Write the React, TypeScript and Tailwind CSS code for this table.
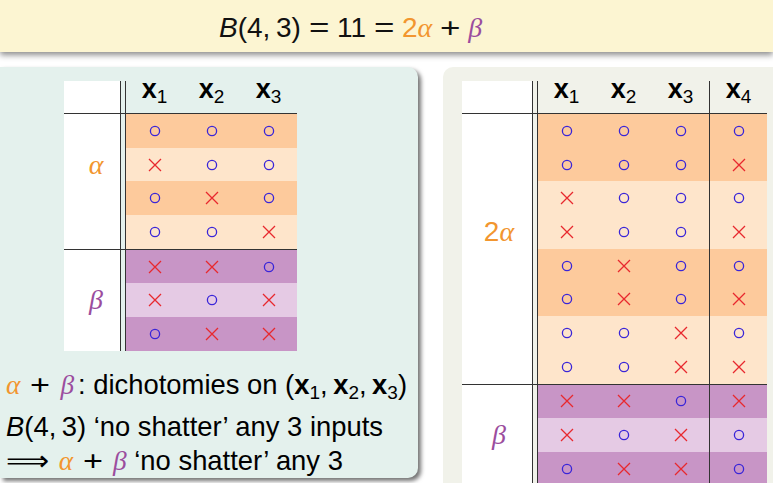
import React from "react";

type Mark = "o" | "x";

const O = () => (
  <svg width="12" height="12" viewBox="0 0 12 12">
    <circle cx="6" cy="6" r="4.6" fill="none" stroke="#3a25d8" strokeWidth="1.3" />
  </svg>
);

const X = () => (
  <svg width="14" height="14" viewBox="0 0 14 14">
    <path d="M1 1 L13 13 M13 1 L1 13" stroke="#e8282e" strokeWidth="1.3" fill="none" />
  </svg>
);

const Alpha = ({ className = "" }: { className?: string }) => (
  <span className={"italic text-[#f2962f] " + className} style={{ fontFamily: '"Liberation Serif", serif' }}>
    α
  </span>
);

const Beta = ({ className = "" }: { className?: string }) => (
  <span className={"italic text-[#9b4d9e] " + className} style={{ fontFamily: '"Liberation Serif", serif' }}>
    β
  </span>
);

const Op = ({ c, w }: { c: string; w: string }) => (
  <span className={"inline-block text-center " + w}>
    <span className="inline-block scale-x-125">{c}</span>
  </span>
);

const XLabel = ({ n }: { n: number }) => (
  <span className="font-bold text-[27px] leading-none text-black">
    x<span className="font-normal text-[19px] align-[-5px]">{n}</span>
  </span>
);

const rowBg = (kind: "ad" | "al" | "bd" | "bl") =>
  kind === "ad"
    ? "bg-[#fdca9c]"
    : kind === "al"
    ? "bg-[#fee5cb]"
    : kind === "bd"
    ? "bg-[#c895c6]"
    : "bg-[#e5cae4]";

type Row = { marks: Mark[]; bg: "ad" | "al" | "bd" | "bl" };

const DataRow = ({ row, sepIndex }: { row: Row; sepIndex?: number }) => (
  <div className={"flex h-[33.7px] " + rowBg(row.bg)}>
    {row.marks.map((m, i) => (
      <div
        key={i}
        className={
          "flex items-center justify-center " +
          (sepIndex !== undefined && i === sepIndex ? "w-[58px] border-l border-[#333]" : "w-[57px]")
        }
      >
        {m === "o" ? <O /> : <X />}
      </div>
    ))}
  </div>
);

function Table({
  labelW,
  labelPad,
  cols,
  rows,
  alphaCount,
  alphaLabelRow,
  alphaLabel,
  sepIndex,
}: {
  labelW: string;
  labelPad: string;
  cols: number;
  rows: Row[];
  alphaCount: number;
  alphaLabelRow: number;
  alphaLabel: React.ReactNode;
  sepIndex?: number;
}) {
  const alphaRows = rows.slice(0, alphaCount);
  const betaRows = rows.slice(alphaCount);
  return (
    <div className="flex">
      <div className={labelW + " bg-white flex flex-col"}>
        <div className="h-[33px] border-b border-[#333]" />
        <div className="flex flex-col border-b border-[#333]">
          {alphaRows.map((_, i) => (
            <div
              key={i}
              className={"h-[33.7px] flex items-center justify-center text-[28px] leading-none " + labelPad}
            >
              {i === alphaLabelRow ? alphaLabel : null}
            </div>
          ))}
        </div>
        <div className="flex flex-col">
          {betaRows.map((_, i) => (
            <div
              key={i}
              className={"h-[33.7px] flex items-center justify-center text-[28px] leading-none " + labelPad}
            >
              {i === 1 ? <Beta /> : null}
            </div>
          ))}
        </div>
      </div>
      <div className="w-[6px] flex flex-col">
        <div className="h-[33px] border-x border-b border-[#333]" />
        <div className="border-x border-b border-[#333]" style={{ height: `${alphaCount * 33.7 + 1}px` }} />
        <div className="border-x border-[#333]" style={{ height: `${betaRows.length * 33.7}px` }} />
      </div>
      <div className="flex flex-col">
        <div className="h-[33px] flex border-b border-[#333]">
          {Array.from({ length: cols }).map((_, i) => (
            <div
              key={i}
              className={
                "flex items-end justify-center pb-[7px] " +
                (sepIndex !== undefined && i === sepIndex ? "w-[58px] border-l border-[#333]" : "w-[57px]")
              }
            >
              <XLabel n={i + 1} />
            </div>
          ))}
        </div>
        {alphaRows.map((r, i) => (
          <DataRow key={i} row={r} sepIndex={sepIndex} />
        ))}
        <div className="h-px bg-[#333]" />
        {betaRows.map((r, i) => (
          <DataRow key={i} row={r} sepIndex={sepIndex} />
        ))}
      </div>
    </div>
  );
}

const leftRows: Row[] = [
  { marks: ["o", "o", "o"], bg: "ad" },
  { marks: ["x", "o", "o"], bg: "al" },
  { marks: ["o", "x", "o"], bg: "ad" },
  { marks: ["o", "o", "x"], bg: "al" },
  { marks: ["x", "x", "o"], bg: "bd" },
  { marks: ["x", "o", "x"], bg: "bl" },
  { marks: ["o", "x", "x"], bg: "bd" },
];

const rightRows: Row[] = [
  { marks: ["o", "o", "o", "o"], bg: "ad" },
  { marks: ["o", "o", "o", "x"], bg: "ad" },
  { marks: ["x", "o", "o", "o"], bg: "al" },
  { marks: ["x", "o", "o", "x"], bg: "al" },
  { marks: ["o", "x", "o", "o"], bg: "ad" },
  { marks: ["o", "x", "o", "x"], bg: "ad" },
  { marks: ["o", "o", "x", "o"], bg: "al" },
  { marks: ["o", "o", "x", "x"], bg: "al" },
  { marks: ["x", "x", "o", "x"], bg: "bd" },
  { marks: ["x", "o", "x", "o"], bg: "bl" },
  { marks: ["o", "x", "x", "o"], bg: "bd" },
];

const Sub = ({ n }: { n: number }) => <span className="text-[19px] align-[-5px]">{n}</span>;

export default function App() {
  return (
    <div
      className="w-[773px] h-[483px] overflow-hidden bg-white text-black"
      style={{ fontFamily: '"Liberation Sans", Arial, sans-serif' }}
    >
      <div className="relative z-10 h-[52px] bg-[#fcf5d2] shadow-[0_3px_6px_rgba(0,0,0,0.45)] flex items-center pl-[219px] pt-[3px]">
        <span className="text-[28px] leading-none text-[#111] whitespace-nowrap">
          <i>B</i>(4,{"\u2009"}3)
          <Op c="=" w="w-[36px]" />
          11
          <Op c="=" w="w-[36px]" />
          <span className="text-[#f2962f]">2</span>
          <Alpha />
          <Op c="+" w="w-[36px]" />
          <Beta />
        </span>
      </div>
      <div className="flex mt-[15px]">
        <div className="w-[418px] h-[411px] shrink-0 bg-[#e4f1ed] rounded-r-[10px] shadow-[3px_3px_4px_rgba(0,0,0,0.55)] pt-[14px]">
          <div className="ml-[64px]">
            <Table
              labelW="w-[56px]"
              labelPad="pl-[8px]"
              cols={3}
              rows={leftRows}
              alphaCount={4}
              alphaLabelRow={1}
              alphaLabel={<Alpha />}
            />
          </div>
          <div className="mt-[17px] pl-[6px] text-[27.4px] leading-[34px] whitespace-nowrap">
            <div>
              <Alpha />
              <Op c="+" w="w-[40px]" />
              <Beta />
              <span className="ml-[4px]">:</span> dichotomies on (<b>x</b>
              <Sub n={1} />,{"\u2009"}
              <b>x</b>
              <Sub n={2} />,{"\u2009"}
              <b>x</b>
              <Sub n={3} />)
            </div>
            <div>
              <i>B</i>(4,{"\u2009"}3) ‘no shatter’ any 3 inputs
            </div>
            <div>
              <span className="inline-block w-[45px]">
                <span
                  className="inline-block scale-x-110 origin-left"
                  style={{ fontFamily: '"DejaVu Sans", sans-serif' }}
                >
                  ⟹
                </span>
              </span>{" "}
              <Alpha />
              <Op c="+" w="w-[40px]" />
              <Beta /> ‘no shatter’ any 3
            </div>
          </div>
        </div>
        <div className="w-[25px] shrink-0" />
        <div className="flex-1 h-[440px] bg-[#f1f2ea] rounded-tl-[10px] pt-[14px] pl-[19px]">
          <Table
            labelW="w-[70px]"
            labelPad="pl-[4px]"
            cols={4}
            rows={rightRows}
            alphaCount={8}
            alphaLabelRow={3}
            alphaLabel={
              <span>
                <span className="text-[#f2962f]">2</span>
                <Alpha />
              </span>
            }
            sepIndex={3}
          />
        </div>
      </div>
    </div>
  );
}
